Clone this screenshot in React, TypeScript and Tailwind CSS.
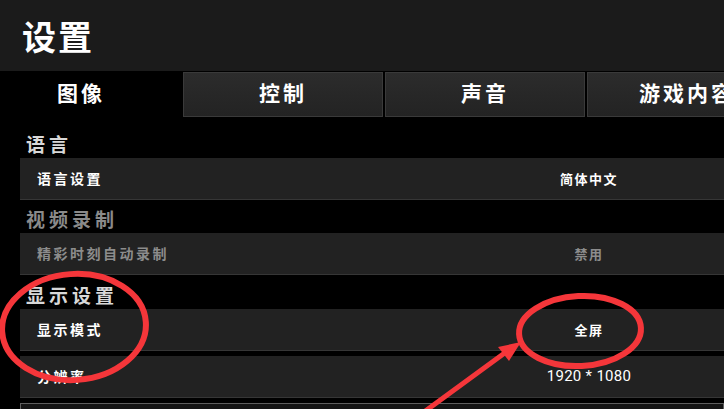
import React from 'react';

const font = '"Noto Sans CJK SC", "Noto Sans", sans-serif';

const tabs = ['图像', '控制', '声音', '游戏内容'];

function SectionTitle({ text, dim }: { text: string; dim?: boolean }) {
    return (
        <div
            className={`h-[29px] flex items-center pl-[26px] text-[19px] font-bold tracking-[4px] leading-none ${dim ? 'text-[#8a8a8a]' : 'text-[#d8d8d8]'}`}
        >
            {text}
        </div>
    );
}

function SettingRow({
    label,
    value,
    dim,
    plainValue
}: {
    label: string;
    value: string;
    dim?: boolean;
    plainValue?: boolean;
}) {
    return (
        <div className="ml-[20px] h-[42px] flex items-center bg-[#222222] border-b border-[#363636]">
            <div
                className={`w-[469px] pl-[17px] text-[14px] font-bold tracking-[2.5px] ${dim ? 'text-[#8c8c8c]' : 'text-white'}`}
            >
                {label}
            </div>
            <div
                className={`w-[200px] text-center ${plainValue ? 'text-[15px] font-normal text-[#f0f0f0] tracking-[0.3px]' : 'text-[13px] font-bold tracking-[1.5px]'} ${dim ? 'text-[#8c8c8c]' : 'text-white'}`}
                style={plainValue ? { fontFamily: 'Roboto, "Noto Sans", sans-serif' } : undefined}
            >
                {value}
            </div>
        </div>
    );
}

export default function App() {
    return (
        <div className="relative w-[724px] h-[409px] overflow-hidden bg-black" style={{ fontFamily: font }}>
            {/* header */}
            <div className="h-[71px] bg-[#1b1b1b] flex items-center pl-[22px]">
                <span className="text-[34px] font-bold text-white tracking-[2px] leading-none">设置</span>
            </div>

            {/* tabs */}
            <div className="mt-[1px] h-[45px] flex gap-[2px] -ml-[19px]">
                {tabs.map((t, i) => (
                    <div
                        key={t}
                        className={`w-[200px] shrink-0 flex items-center justify-center pb-[4px] text-[21px] font-bold tracking-[3px] text-white whitespace-nowrap ${
                            i === 0 ? 'bg-black' : 'bg-gradient-to-b from-[#2c2c2c] to-[#232323] border border-[#3a3a3a]'
                        }`}
                    >
                        {t}
                    </div>
                ))}
            </div>

            {/* list */}
            <div className="pt-[12px]">
                <SectionTitle text="语言" />
                <SettingRow label="语言设置" value="简体中文" />
                <div className="h-[4px]" />
                <SectionTitle text="视频录制" dim />
                <SettingRow label="精彩时刻自动录制" value="禁用" dim />
                <div className="h-[5px]" />
                <SectionTitle text="显示设置" />
                <SettingRow label="显示模式" value="全屏" />
                <div className="h-[5px]" />
                <SettingRow label="分辨率" value="1920 * 1080" plainValue />
                <div className="h-[5px]" />
                <div className="ml-[20px] h-[42px] bg-[#141414] border border-[#5e5e5e]" />
            </div>

            {/* red annotations */}
            <svg className="absolute inset-0 pointer-events-none" width="724" height="409" viewBox="0 0 724 409">
                <ellipse cx="74" cy="327" rx="72" ry="53" fill="none" stroke="#f5363a" strokeWidth="6" transform="rotate(-4 74 327)" />
                <ellipse cx="580" cy="331" rx="61" ry="35" fill="none" stroke="#f5363a" strokeWidth="6" transform="rotate(-3 580 331)" />
                <line x1="424" y1="412" x2="506" y2="352" stroke="#f5363a" strokeWidth="5" strokeLinecap="round" />
                <polygon points="521,342 498,347 509,361" fill="#f5363a" />
            </svg>
        </div>
    );
}
